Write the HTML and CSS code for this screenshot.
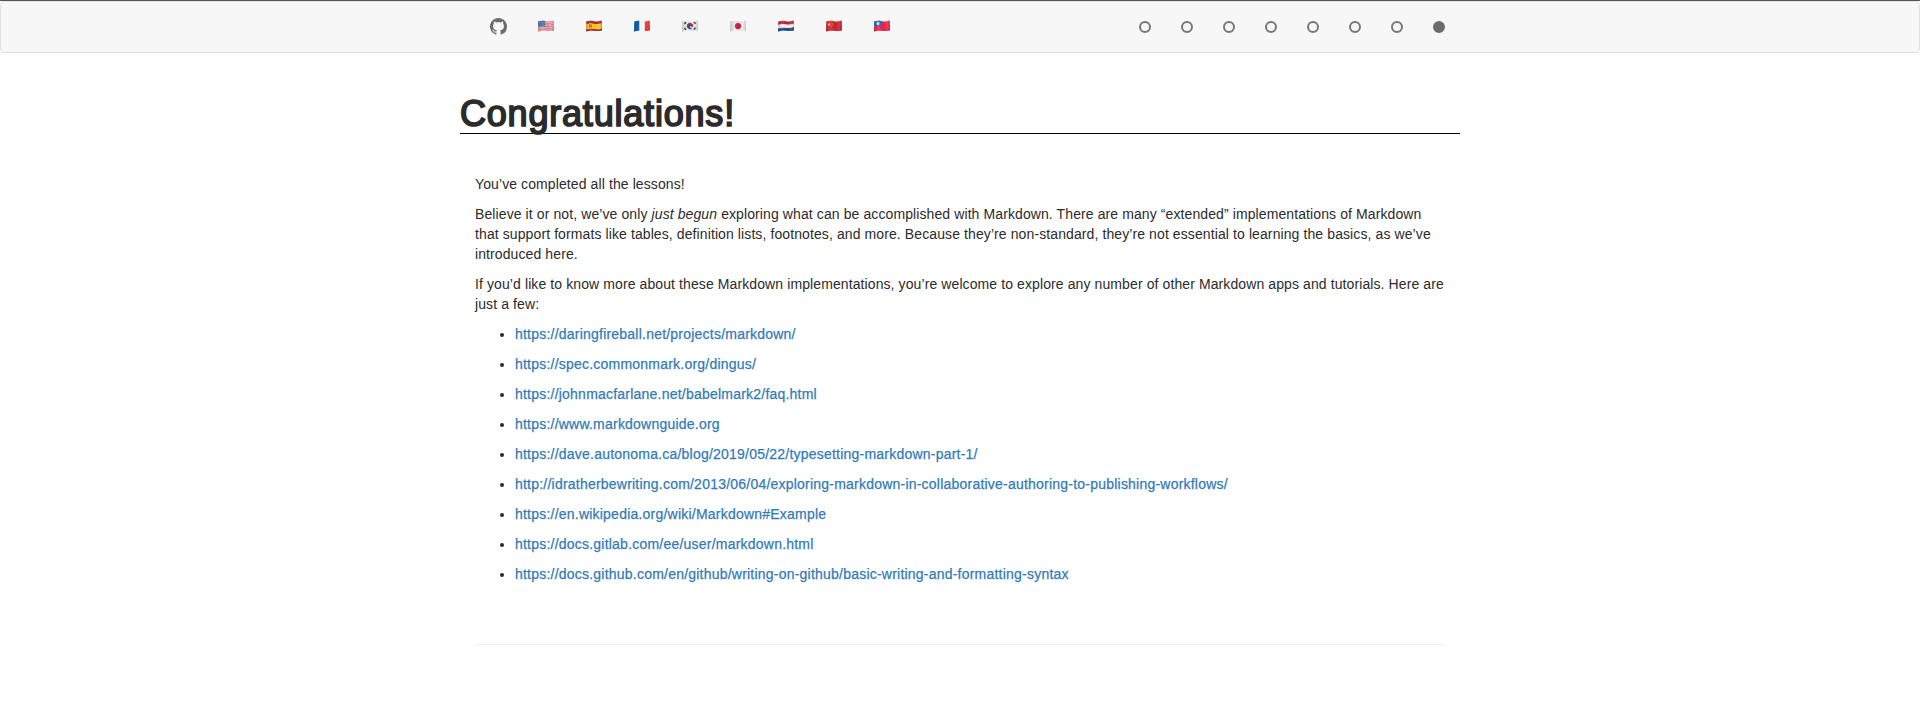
FILE: index.html
```html
<!DOCTYPE html>
<html lang="en">
<head>
<meta charset="utf-8">
<title>Congratulations!</title>
<link rel="stylesheet" href="styles.css">
</head>
<body>
<svg class="defs" width="0" height="0">
  <defs>
    <clipPath id="wave"><path d="M0.3 1.4C3 .6 5 .7 8 1.2S13 1.2 15.7.4L16 10.4C13 11.3 11 11.2 8 10.8S3 10.8 0 11.6Z"/></clipPath>
    <linearGradient id="shade"><stop offset="0" stop-color="#000" stop-opacity=".18"/><stop offset=".3" stop-color="#fff" stop-opacity=".12"/><stop offset=".55" stop-color="#000" stop-opacity=".04"/><stop offset=".8" stop-color="#fff" stop-opacity=".1"/><stop offset="1" stop-color="#000" stop-opacity=".2"/></linearGradient>
  </defs>
</svg>
<nav class="navbar">
  <div class="navbar-inner">
    <ul class="languages">
      <li><a class="github" href="#" aria-label="GitHub"><svg width="17" height="17" viewBox="0 0 16 16"><path fill="#6c6c6c" d="M8 0C3.58 0 0 3.58 0 8c0 3.54 2.29 6.53 5.47 7.59.4.07.55-.17.55-.38 0-.19-.01-.82-.01-1.49-2.01.37-2.53-.49-2.69-.94-.09-.23-.48-.94-.82-1.13-.28-.15-.68-.52-.01-.53.63-.01 1.08.58 1.23.82.72 1.21 1.87.87 2.33.66.07-.52.28-.87.51-1.07-1.78-.2-3.64-.89-3.64-3.95 0-.87.31-1.59.82-2.15-.08-.2-.36-1.02.08-2.12 0 0 .67-.21 2.2.82a7.6 7.6 0 0 1 4 0c1.53-1.04 2.2-.82 2.2-.82.44 1.1.16 1.92.08 2.12.51.56.82 1.27.82 2.15 0 3.07-1.87 3.75-3.65 3.95.29.25.54.73.54 1.48 0 1.07-.01 1.93-.01 2.2 0 .21.15.46.55.38A8.01 8.01 0 0 0 16 8c0-4.42-3.58-8-8-8z"/></svg></a></li>
      <li><svg class="flag" viewBox="0 0 16 12"><g clip-path="url(#wave)"><path fill="#f0dcdf" d="M0 0h16v12H0z"/><path fill="none" stroke="#dc5a67" stroke-width=".9" d="M0 1.8q4-1.4 8-.4t8-.8M0 3.5q4-1.4 8-.4t8-.8M0 5.2q4-1.4 8-.4t8-.8M0 6.9q4-1.4 8-.4t8-.8M0 8.6q4-1.4 8-.4t8-.8M0 10.3q4-1.4 8-.4t8-.8M0 11.8q4-1.4 8-.4t8-.8"/><path fill="#3b68a5" d="M0 0h7v6.6H0z"/><path stroke="#9db6d6" stroke-width=".5" stroke-dasharray=".6 .8" d="M1 2.5h6M1 4h6M1 5.5h6"/><path fill="url(#shade)" d="M0 0h16v12H0z"/></g></svg></li>
      <li><svg class="flag" viewBox="0 0 16 12"><g clip-path="url(#wave)"><path fill="#b81c26" d="M0 0h16v12H0z"/><path fill="#f8cd24" d="M0 4.2q4-1.4 8-.5t8-.8v5.5q-4 1.3-8 .6t-8 .7z"/><path fill="#b7452a" d="M3 4.6h2.8v3H3z"/><path fill="#e4a24d" d="M4 5.2h.9v1.5H4z"/><path fill="url(#shade)" d="M0 0h16v12H0z"/></g></svg></li>
      <li><svg class="flag" viewBox="0 0 16 12"><g clip-path="url(#wave)"><path fill="#fafafa" d="M0 0h16v12H0z"/><path fill="#0c56a6" d="M0 0h5.3v12H0z"/><path fill="#ea3a2d" d="M10.8 0H16v12h-5.2z"/><path fill="url(#shade)" opacity=".5" d="M0 0h16v12H0z"/></g></svg></li>
      <li><svg class="flag" viewBox="0 0 16 12"><g clip-path="url(#wave)"><path fill="#e9e9e9" d="M0 0h16v12H0z"/><g transform="rotate(25 8 6)"><path fill="#cf233c" d="M4.9 6a3.1 3.1 0 0 1 6.2 0z"/><path fill="#1b4b96" d="M4.9 6a3.1 3.1 0 0 0 6.2 0 1.5 1.5 0 0 1-3.1 0 1.5 1.5 0 0 0-3.1 0z"/></g><path stroke="#222" stroke-width="1.4" d="M2.5 4.1 4 2.1M12 1.9l1.5 1.8M2.5 7.9 4 9.9M12 9.7l1.5-2"/><path fill="url(#shade)" d="M0 0h16v12H0z"/></g></svg></li>
      <li><svg class="flag" viewBox="0 0 16 12"><g clip-path="url(#wave)"><path fill="#e9e9e9" d="M0 0h16v12H0z"/><circle cx="8" cy="6" r="3.1" fill="#d01c42"/><path fill="url(#shade)" d="M0 0h16v12H0z"/></g></svg></li>
      <li><svg class="flag" viewBox="0 0 16 12"><g clip-path="url(#wave)"><path fill="#f4f4f4" d="M0 0h16v12H0z"/><path fill="#b92835" d="M0 0h16v3.4q-4 1.5-8 .8t-8 .6z"/><path fill="#214990" d="M0 8.6q4-1.3 8-.7t8-.8V12H0z"/><path fill="url(#shade)" d="M0 0h16v12H0z"/></g></svg></li>
      <li><svg class="flag" viewBox="0 0 16 12"><g clip-path="url(#wave)"><path fill="#cf222f" d="M0 0h16v12H0z"/><path fill="#f4cb28" d="m3.1 2.6.5 1.2h1.3l-1 .9.4 1.4-1.2-.8-1.2.8.4-1.4-1-.9h1.3z"/><path fill="none" stroke="#d58a2b" stroke-width=".7" d="M5.5 2.2q1.4.8 1.2 2.2T5.3 6.7"/><path fill="url(#shade)" d="M0 0h16v12H0z"/></g></svg></li>
      <li><svg class="flag" viewBox="0 0 16 12"><g clip-path="url(#wave)"><path fill="#ee2348" d="M0 0h16v12H0z"/><path fill="#1870c8" d="M0 0h7.7v6H0z"/><circle cx="4" cy="3.7" r="1.4" fill="#e9f5ff"/><path fill="url(#shade)" d="M0 0h16v12H0z"/></g></svg></li>
    </ul>
    <ol class="progress">
      <li class="dot"></li><li class="dot"></li><li class="dot"></li><li class="dot"></li><li class="dot"></li><li class="dot"></li><li class="dot"></li><li class="dot current"></li>
    </ol>
  </div>
</nav>
<main class="container">
  <h1 class="title">Congratulations!</h1>
  <div class="content">
    <p>You’ve completed all the lessons!</p>
    <p>Believe it or not, we’ve only <em>just begun</em> exploring what can be accomplished with Markdown. There are many “extended” implementations of Markdown<br>that support formats like tables, definition lists, footnotes, and more. Because they’re non-standard, they’re not essential to learning the basics, as we’ve<br>introduced here.</p>
    <p>If you’d like to know more about these Markdown implementations, you’re welcome to explore any number of other Markdown apps and tutorials. Here are<br>just a few:</p>
    <ul class="links">
      <li><a href="#">https://daringfireball.net/projects/markdown/</a></li>
      <li><a href="#">https://spec.commonmark.org/dingus/</a></li>
      <li><a href="#">https://johnmacfarlane.net/babelmark2/faq.html</a></li>
      <li><a href="#">https://www.markdownguide.org</a></li>
      <li><a href="#">https://dave.autonoma.ca/blog/2019/05/22/typesetting-markdown-part-1/</a></li>
      <li><a href="#">http://idratherbewriting.com/2013/06/04/exploring-markdown-in-collaborative-authoring-to-publishing-workflows/</a></li>
      <li><a href="#">https://en.wikipedia.org/wiki/Markdown#Example</a></li>
      <li><a href="#">https://docs.gitlab.com/ee/user/markdown.html</a></li>
      <li><a href="#">https://docs.github.com/en/github/writing-on-github/basic-writing-and-formatting-syntax</a></li>
    </ul>
    <hr class="rule">
  </div>
</main>
</body>
</html>
```
FILE: styles.css
```css
* { box-sizing: border-box; }

body {
  margin: 0;
  border-top: 1px solid #555459;
  background: #fff;
  color: #2b2b2b;
  font: 14px/20px "Helvetica Neue", "Liberation Sans", Arial, sans-serif;
  overflow: hidden;
}

.defs { display: block; }

.navbar {
  height: 52px;
  border: 1px solid #e1e1e1;
  border-radius: 4px;
  background: #f7f7f7;
}

.navbar-inner {
  display: flex;
  justify-content: space-between;
  align-items: center;
  width: 970px;
  height: 50px;
  margin: 0 auto;
  padding-left: 15px;
}

.languages,
.progress {
  display: flex;
  margin: 0;
  padding: 0;
  list-style: none;
}

.languages li {
  display: flex;
  align-items: center;
  width: 48px;
  height: 18px;
}

.github { display: flex; margin-bottom: 1px; }

.flag {
  width: 16px;
  height: 12px;
  margin-bottom: 2px;
}

.progress { gap: 30px; }

.dot {
  width: 12px;
  height: 12px;
  border: 2px solid #777;
  border-radius: 50%;
}

.current {
  border-color: #6c6c6c;
  background: #6c6c6c;
}

.container {
  width: 1000px;
  margin: 0 auto;
}

.title {
  height: 41px;
  margin: 40px 0;
  border-bottom: 1px solid #000;
  font-size: 36px;
  font-weight: normal;
  line-height: 42px;
  letter-spacing: 0.8px;
  -webkit-text-stroke: 1.7px #2b2b2b;
}

.content { padding: 0 15px; }

.content p {
  margin: 0 0 10px;
  letter-spacing: 0.1px;
  white-space: nowrap;
}

.links {
  margin: 0;
  padding-left: 40px;
}

.links li { margin-bottom: 10px; }

.links a {
  color: #337ab7;
  letter-spacing: 0.22px;
  text-decoration: none;
  -webkit-text-stroke: 0.25px #337ab7;
}

.rule {
  margin: 60px 0 0;
  border: 0;
  border-top: 1px solid #eee;
}
```
